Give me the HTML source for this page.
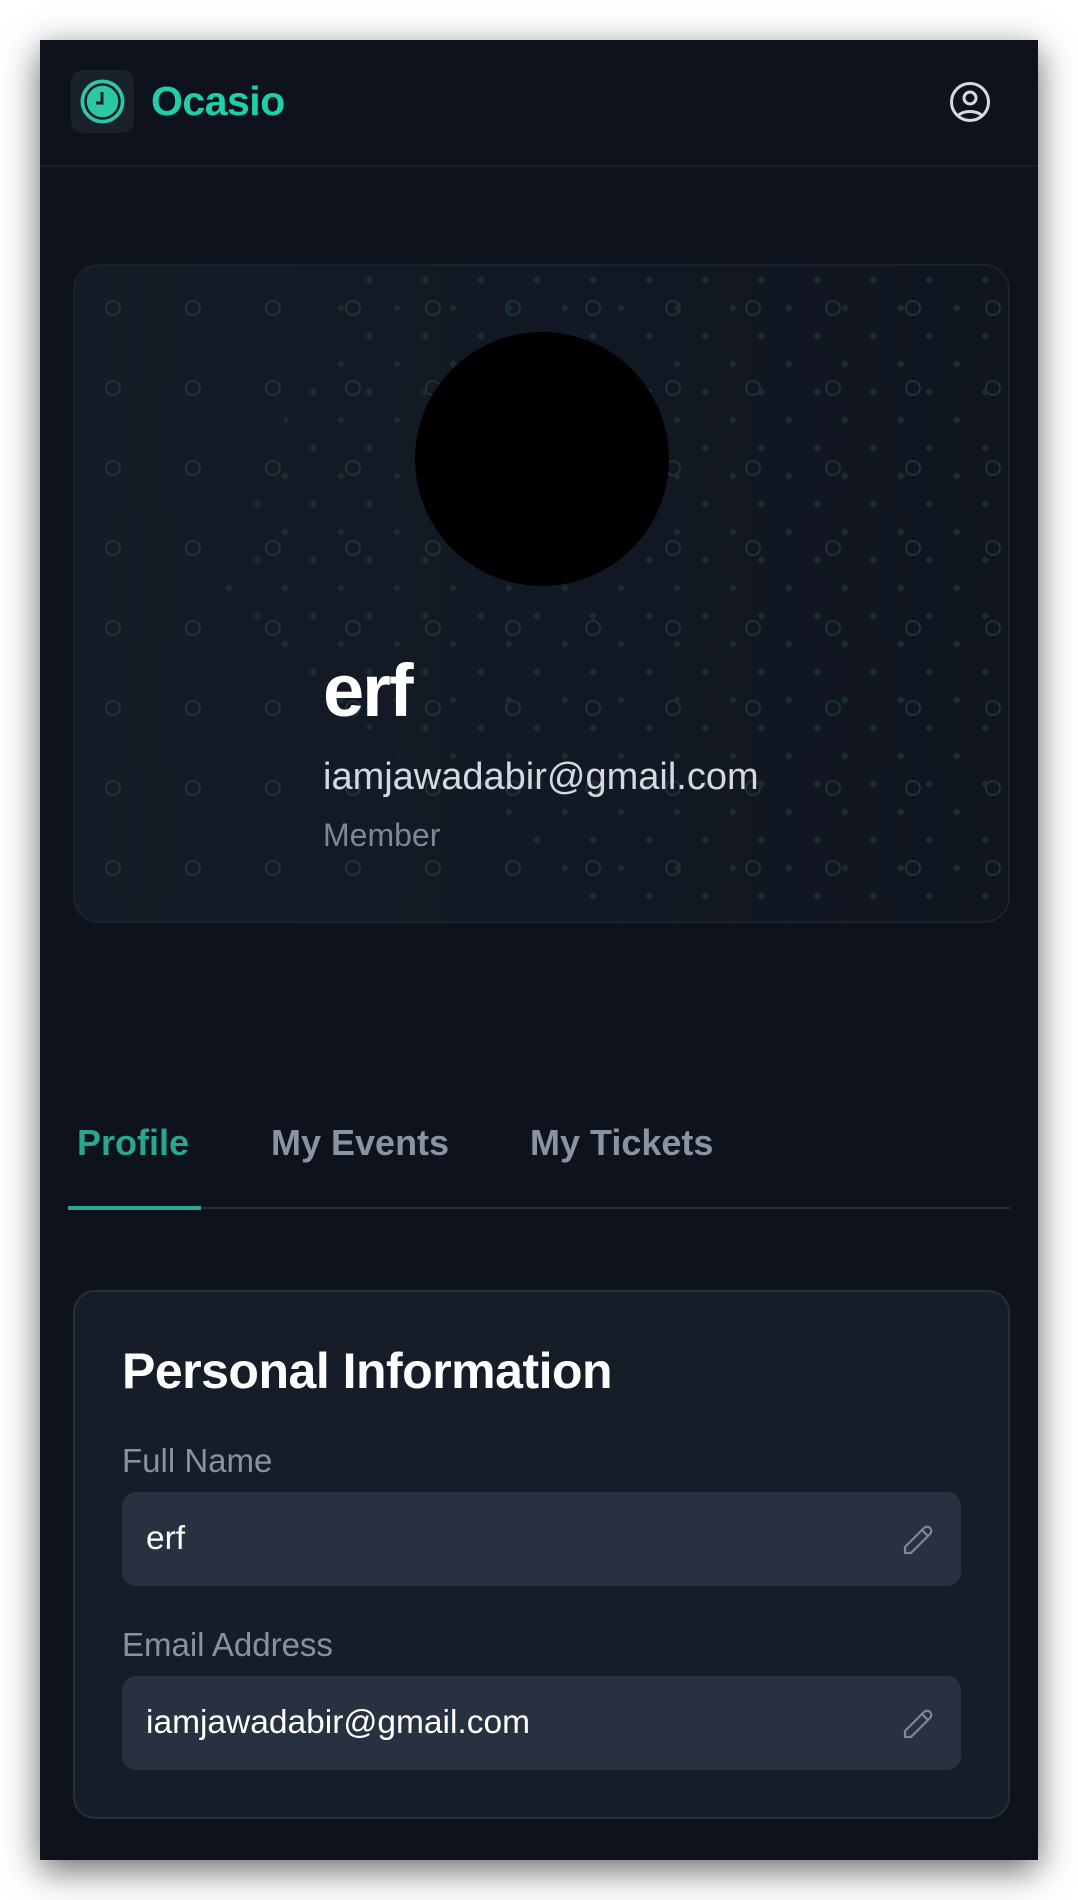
<!DOCTYPE html>
<html><head><meta charset="utf-8"><style>
*{box-sizing:border-box;margin:0;padding:0}
html,body{width:1078px;height:1900px;background:#fff;overflow:hidden;font-family:"Liberation Sans",sans-serif}
.frame{position:absolute;left:40px;top:40px;width:998px;height:1820px;background:#0e121c;box-shadow:0 10px 34px rgba(0,0,0,.6)}
.abs{position:absolute}
.header{left:0;top:0;width:998px;height:127px;border-bottom:2px solid #1a212c}
.logo{left:31px;top:30px;width:63px;height:63px;border-radius:12px;background:#1a212b}
.brand{left:111px;top:38px;font-size:41px;font-weight:700;color:#1fcfa9;letter-spacing:-0.5px}
.card{left:33px;top:224px;width:937px;height:659px;border-radius:26px;border:2px solid #1a222d;background:linear-gradient(90deg,#151c27 0%,#121823 60%,#101520 100%);overflow:hidden}
.avatar{left:340px;top:66px;width:254px;height:254px;border-radius:50%;background:#000}
.name{left:248px;top:382px;font-size:74px;font-weight:700;color:#fff;letter-spacing:-2px}
.email{left:248px;top:490px;font-size:38px;color:#d3d8e2}
.member{left:248px;top:551px;font-size:32px;color:#7f8797}
.tab{top:1082px;font-size:36px;font-weight:600;color:#8b92a1}
.pi{left:33px;top:1250px;width:937px;height:529px;border-radius:22px;border:2px solid #262e3a;background:#171d28}
.title{left:47px;top:50px;font-size:50px;font-weight:700;color:#fff;letter-spacing:-0.5px}
.label{left:47px;font-size:33px;color:#8a92a1}
.input{left:47px;width:839px;height:94px;border-radius:14px;background:#283140}
.val{left:24px;top:28px;font-size:33.5px;color:#fff}
.pen{right:26px;top:30px}
</style></head><body>
<div class="frame">
  <div class="abs header">
    <div class="abs logo">
      <svg width="63" height="63" viewBox="0 0 63 63"><circle cx="31.5" cy="31.5" r="22" fill="#2cc7a5"/><circle cx="31.5" cy="31.5" r="17" fill="none" stroke="#0f1a20" stroke-width="2.5"/><path d="M31 22v11h-6" fill="none" stroke="#0f1a20" stroke-width="3"/></svg>
    </div>
    <div class="abs brand">Ocasio</div>
    <svg class="abs" style="left:909px;top:40px" width="42" height="44" viewBox="0 0 42 44"><circle cx="21" cy="22" r="18.5" fill="none" stroke="#d6dae2" stroke-width="3"/><circle cx="21" cy="18" r="6" fill="none" stroke="#d6dae2" stroke-width="3"/><path d="M9 36c4-6 20-6 24 0" fill="none" stroke="#d6dae2" stroke-width="3"/></svg>
  </div>

  <div class="abs card">
    <svg class="abs" style="left:0;top:0" width="937" height="659">
      <defs>
        <pattern id="c" x="-2" y="0" width="80" height="80" patternUnits="userSpaceOnUse"><circle cx="40" cy="42" r="7" fill="none" stroke="#1e3a3d" stroke-width="1.6"/></pattern>
        <pattern id="d" x="14" y="14" width="56" height="56" patternUnits="userSpaceOnUse"><path d="M0 -4l4 4-4 4-4-4z M56 -4l4 4-4 4-4-4z M0 52l4 4-4 4-4-4z M56 52l4 4-4 4-4-4z M28 24l4 4-4 4-4-4z" fill="#16302f"/></pattern>
        <clipPath id="cp"><polygon points="270,0 937,0 937,659 520,659 140,330"/></clipPath>
      </defs>
      <rect width="937" height="659" fill="url(#c)"/>
      <rect width="937" height="659" fill="url(#d)" clip-path="url(#cp)"/>
    </svg>
    <div class="abs avatar"></div>
    <div class="abs name">erf</div>
    <div class="abs email">iamjawadabir@gmail.com</div>
    <div class="abs member">Member</div>
  </div>

  <div class="abs tab" style="left:37px;color:#2aa58f">Profile</div>
  <div class="abs tab" style="left:231px">My Events</div>
  <div class="abs tab" style="left:490px">My Tickets</div>
  <div class="abs" style="left:28px;top:1167px;width:942px;height:2px;background:#262d39"></div>
  <div class="abs" style="left:28px;top:1166px;width:133px;height:4px;background:#2aa58f"></div>

  <div class="abs pi">
    <div class="abs title">Personal Information</div>
    <div class="abs label" style="top:150px">Full Name</div>
    <div class="abs input" style="top:200px"><div class="abs val">erf</div>
      <svg class="abs pen" width="34" height="34" viewBox="0 0 34 34"><path d="M4 25L23 6a4 4 0 0 1 6 6L10 31H4z" fill="none" stroke="#7f8796" stroke-width="2.2" stroke-linejoin="round"/><path d="M21 8l6 6" stroke="#7f8796" stroke-width="2.2"/></svg>
    </div>
    <div class="abs label" style="top:334px">Email Address</div>
    <div class="abs input" style="top:384px"><div class="abs val">iamjawadabir@gmail.com</div>
      <svg class="abs pen" width="34" height="34" viewBox="0 0 34 34"><path d="M4 25L23 6a4 4 0 0 1 6 6L10 31H4z" fill="none" stroke="#7f8796" stroke-width="2.2" stroke-linejoin="round"/><path d="M21 8l6 6" stroke="#7f8796" stroke-width="2.2"/></svg>
    </div>
  </div>
</div>
</body></html>
